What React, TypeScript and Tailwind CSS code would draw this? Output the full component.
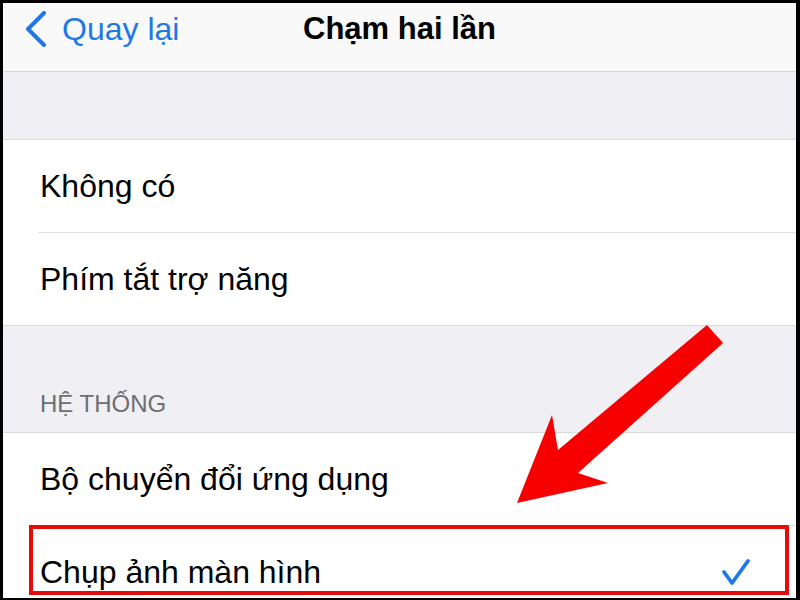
import React from 'react';

const font = { fontFamily: '"Liberation Sans", Arial, sans-serif' };

const Row = ({ label }: { label: string }) => (
  <div className="pl-[35px] bg-white">
    <div className="flex h-[93px] items-center border-b border-[#dedee2] pl-[2px]">
      <span className="text-[32px] leading-none text-black">{label}</span>
    </div>
  </div>
);

const App = () => {
  return (
    <div className="relative w-[800px] h-[600px] bg-black pt-[3px] pl-[3px] pr-[4px] pb-[2px]" style={font}>
      <div className="flex h-full flex-col overflow-hidden bg-white">
        {/* Navigation bar */}
        <div className="grid h-[69px] shrink-0 grid-cols-[1fr_auto_1fr] items-center border-b border-[#d6d6da] bg-[#f9f9f9] pb-[17px]">
          <div className="flex items-center gap-[15px] pl-[22px] text-[#1e78e6]">
            <svg width="22" height="36" viewBox="0 0 22 36" fill="none">
              <path d="M19 2 L3 18 L19 34" stroke="currentColor" strokeWidth="4" strokeLinecap="round" strokeLinejoin="round" />
            </svg>
            <span className="text-[32px] leading-none">Quay lại</span>
          </div>
          <h1 className="text-[31px] font-bold leading-none text-black">Chạm hai lần</h1>
          <div />
        </div>

        <div className="h-[68px] shrink-0 border-b border-[#d9d9de] bg-[#efeff4]" />

        <Row label="Không có" />
        <div className="bg-white border-b border-[#d9d9de]">
          <div className="flex h-[92px] items-center pl-[37px]">
            <span className="text-[32px] leading-none text-black">Phím tắt trợ năng</span>
          </div>
        </div>

        {/* Section header */}
        <div className="flex h-[107px] shrink-0 items-end border-b border-[#d9d9de] bg-[#efeff4] pb-[16px] pl-[37px]">
          <span className="text-[24px] leading-none text-[#6d6d72]">HỆ THỐNG</span>
        </div>

        <Row label="Bộ chuyển đổi ứng dụng" />

        <div className="relative bg-white">
          <div className="flex h-[92px] items-center justify-between pl-[37px] pr-[45px]">
            <span className="text-[32px] leading-none text-black">Chụp ảnh màn hình</span>
            <svg width="30" height="28" viewBox="0 0 30 28" fill="none" className="text-[#1e78e6]">
              <path d="M3 14 L11 25 L27 3" stroke="currentColor" strokeWidth="3.8" strokeLinecap="round" strokeLinejoin="round" />
            </svg>
          </div>
          <div className="absolute left-[26px] top-[-1px] h-[70px] w-[760px] border-[4px] border-[#e60a0a]" />
        </div>
      </div>

      {/* Callout arrow */}
      <svg className="pointer-events-none absolute inset-0" width="800" height="600" viewBox="0 0 800 600">
        <polygon points="707,325 723,343 578,473 608,483 517,503 552,415 558,450" fill="#f80000" />
      </svg>
    </div>
  );
};

export default App;
